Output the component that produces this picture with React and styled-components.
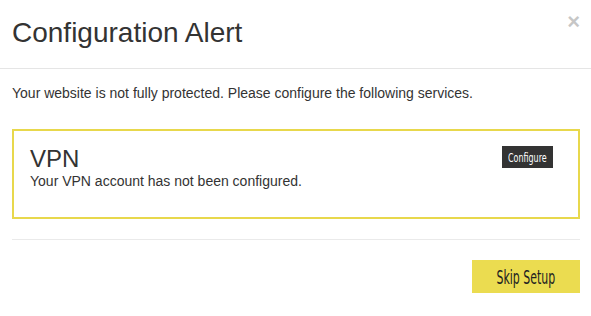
import React from "react";
import styled, { createGlobalStyle } from "styled-components";

const Global = createGlobalStyle`
  html, body { margin: 0; padding: 0; background: #fff; }
  body { font-family: "Liberation Sans", Arial, sans-serif; color: #333; }
  * { box-sizing: border-box; }
`;

const Modal = styled.div`
  width: 591px;
  height: 316px;
  background: #fff;
  display: flex;
  flex-direction: column;
`;

const Header = styled.div`
  height: 69px;
  padding: 17px 11px 0 12px;
  border-bottom: 1px solid #e5e5e5;
  display: flex;
  justify-content: space-between;
  align-items: flex-start;
`;

const Title = styled.h4`
  margin: 0;
  font-size: 28px;
  line-height: 31px;
  font-weight: 400;
  color: #333;
`;

const Close = styled.button`
  border: 0;
  background: none;
  padding: 0;
  margin: -6px 0 0 0;
  font-family: "Liberation Sans", Arial, sans-serif;
  font-size: 22px;
  font-weight: 700;
  line-height: 1;
  color: #000;
  opacity: 0.22;
  cursor: pointer;
`;

const Body = styled.div`
  padding: 14px 11px 0 12px;
`;

const Lead = styled.p`
  margin: 0;
  font-size: 14px;
  line-height: 20px;
`;

const ServiceBox = styled.div`
  margin-top: 26px;
  border: 2px solid #e8d84c;
  padding: 15px 25px 26px 16px;
  display: flex;
  justify-content: space-between;
  align-items: flex-start;
`;

const ServiceText = styled.div`
  display: flex;
  flex-direction: column;
`;

const ServiceName = styled.h3`
  margin: 0;
  font-size: 24px;
  line-height: 25px;
  font-weight: 400;
  color: #333;
`;

const ServiceNote = styled.p`
  margin: 0;
  font-size: 14px;
  line-height: 20px;
`;

const Condensed = styled.span`
  display: inline-block;
  transform: scaleX(${(p) => p.$scale});
  white-space: nowrap;
`;

const ActionButton = styled.button`
  border: 0;
  margin: 0;
  padding: 0;
  display: flex;
  align-items: center;
  justify-content: center;
  font-family: "DejaVu Sans Condensed", "Liberation Sans Narrow", sans-serif;
  cursor: pointer;
  background: ${(p) => (p.$variant === "dark" ? "#333" : "#ebdc50")};
  color: ${(p) => (p.$variant === "dark" ? "#fff" : "#222")};
  width: ${(p) => p.$w}px;
  height: ${(p) => p.$h}px;
  font-size: ${(p) => p.$fs}px;
  overflow: hidden;
`;

const Divider = styled.hr`
  margin: 20px 0 0 0;
  border: 0;
  border-top: 1px solid #eaeaea;
`;

const Footer = styled.div`
  padding: 20px 11px 0 12px;
  display: flex;
  justify-content: flex-end;
`;

export default function App() {
  return (
    <>
      <Global />
      <Modal>
        <Header>
          <Title>Configuration Alert</Title>
          <Close aria-label="Close">×</Close>
        </Header>
        <Body>
          <Lead>
            Your website is not fully protected. Please configure the following services.
          </Lead>
          <ServiceBox>
            <ServiceText>
              <ServiceName>VPN</ServiceName>
              <ServiceNote>Your VPN account has not been configured.</ServiceNote>
            </ServiceText>
            <ActionButton $variant="dark" $w={51} $h={22} $fs={13}>
              <Condensed $scale={0.68}>Configure</Condensed>
            </ActionButton>
          </ServiceBox>
          <Divider />
        </Body>
        <Footer>
          <ActionButton $variant="yellow" $w={108} $h={33} $fs={19}>
            <Condensed $scale={0.64}>Skip Setup</Condensed>
          </ActionButton>
        </Footer>
      </Modal>
    </>
  );
}
